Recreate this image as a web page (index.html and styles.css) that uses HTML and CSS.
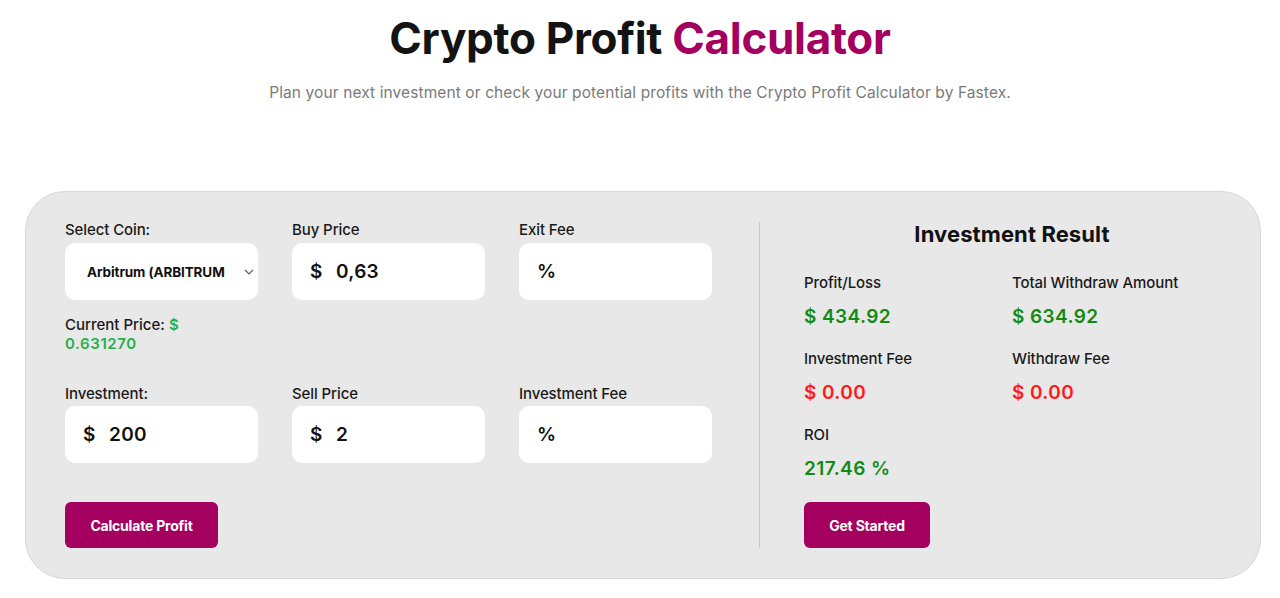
FILE: index.html
```html
<!DOCTYPE html>
<html lang="en">
<head>
<meta charset="utf-8">
<title>Crypto Profit Calculator</title>
<link rel="stylesheet" href="styles.css">
</head>
<body>
<header class="hero">
  <h1 class="title">Crypto Profit <span class="accent">Calculator</span></h1>
  <p class="subtitle">Plan your next investment or check your potential profits with the Crypto Profit Calculator by Fastex.</p>
</header>

<section class="card">
  <div class="form">
    <div class="row">
      <div class="field">
        <label class="label">Select Coin:</label>
        <div class="box select">
          <span class="select-text">Arbitrum (ARBITRUM</span>
          <svg class="chev" width="10" height="6" viewBox="0 0 10 6"><path d="M1 1l4 4 4-4" fill="none" stroke="#555" stroke-width="1.1"/></svg>
        </div>
        <div class="current">Current Price: <span class="green">$</span><br><span class="green">0.631270</span></div>
      </div>
      <div class="field">
        <label class="label">Buy Price</label>
        <div class="box"><span class="unit">$</span><span class="val">0,63</span></div>
      </div>
      <div class="field">
        <label class="label">Exit Fee</label>
        <div class="box"><span class="unit">%</span></div>
      </div>
    </div>
    <div class="row row2">
      <div class="field">
        <label class="label">Investment:</label>
        <div class="box"><span class="unit">$</span><span class="val">200</span></div>
      </div>
      <div class="field">
        <label class="label">Sell Price</label>
        <div class="box"><span class="unit">$</span><span class="val">2</span></div>
      </div>
      <div class="field">
        <label class="label">Investment Fee</label>
        <div class="box"><span class="unit">%</span></div>
      </div>
    </div>
    <button class="btn calc">Calculate Profit</button>
  </div>

  <div class="divider"></div>

  <div class="result">
    <h2 class="result-title">Investment Result</h2>
    <div class="grid">
      <div class="item">
        <div class="label">Profit/Loss</div>
        <div class="value pos">$ 434.92</div>
      </div>
      <div class="item">
        <div class="label">Total Withdraw Amount</div>
        <div class="value pos">$ 634.92</div>
      </div>
      <div class="item">
        <div class="label">Investment Fee</div>
        <div class="value neg">$ 0.00</div>
      </div>
      <div class="item">
        <div class="label">Withdraw Fee</div>
        <div class="value neg">$ 0.00</div>
      </div>
      <div class="item">
        <div class="label">ROI</div>
        <div class="value pos">217.46 %</div>
      </div>
    </div>
    <button class="btn start">Get Started</button>
  </div>
</section>
</body>
</html>
```

FILE: styles.css
```css
* { box-sizing: border-box; }
html, body { margin: 0; padding: 0; background: #fff; }
body {
  font-family: Inter, "Noto Sans", "Liberation Sans", sans-serif;
  color: #111;
  width: 1280px;
  height: 598px;
  overflow: hidden;
}
.hero { text-align: center; padding-top: 12px; }
.title {
  margin: 0;
  font-size: 44px;
  line-height: 52px;
  font-weight: 700;
  letter-spacing: -0.3px;
  color: #131313;
}
.accent { color: #a4005f; }
.subtitle {
  margin: 19px 0 0;
  font-size: 15.5px;
  line-height: 20px;
  color: #7a7a7a;
  letter-spacing: 0.1px;
}
.card {
  margin: 88px 0 0 25px;
  width: 1236px;
  height: 388px;
  background: #e8e8e8;
  border: 1px solid #d6d6d6;
  border-radius: 40px;
  display: flex;
  padding: 29px 0 0 39px;
}
.form { width: 647px; display: flex; flex-direction: column; }
.row { display: flex; gap: 34px; }
.row2 { margin-top: 32px; }
.field { width: 193px; display: flex; flex-direction: column; }
.label {
  font-size: 15px;
  line-height: 18px;
  font-weight: 500;
  color: #1a1a1a;
  letter-spacing: -0.1px;
}
.box {
  margin-top: 4px;
  height: 57px;
  background: #fff;
  border-radius: 10px;
  display: flex;
  align-items: center;
  padding-left: 18px;
  font-size: 19px;
  font-weight: 600;
  color: #111;
}
.row2 .box { margin-top: 3px; }
.unit { width: 26px; }
.val { letter-spacing: 0.3px; }
.select { padding-left: 22px; position: relative; }
.select-text {
  font-size: 13.5px;
  font-weight: 700;
  white-space: nowrap;
  letter-spacing: -0.1px;
}
.chev { position: absolute; right: 4px; top: 26px; }
.current {
  margin-top: 15px;
  font-size: 15px;
  line-height: 19px;
  font-weight: 500;
  color: #1a1a1a;
}
.green { color: #27ae4f; font-weight: 600; letter-spacing: 0.6px; }
.btn {
  border: none;
  background: #a4005f;
  color: #fff;
  font-family: inherit;
  font-size: 14px;
  font-weight: 700;
  border-radius: 6px;
  height: 46px;
  cursor: pointer;
  letter-spacing: -0.2px;
}
.calc { margin-top: 39px; width: 153px; }
.divider {
  width: 1px;
  background: #c8c8c8;
  margin: 1px 0 0 47px;
  height: 326px;
}
.result { margin-left: 44px; width: 416px; display: flex; flex-direction: column; }
.result-title {
  margin: 0;
  text-align: center;
  font-size: 22px;
  line-height: 26px;
  font-weight: 700;
  color: #111;
  letter-spacing: 0.1px;
}
.grid {
  margin-top: 27px;
  display: grid;
  grid-template-columns: 208px 208px;
  row-gap: 21px;
}
.value {
  margin-top: 13px;
  font-size: 19px;
  line-height: 24px;
  font-weight: 600;
  letter-spacing: 0.4px;
}
.pos { color: #138a13; }
.neg { color: #ff1a1a; }
.start { margin-top: 21px; width: 126px; }
```
